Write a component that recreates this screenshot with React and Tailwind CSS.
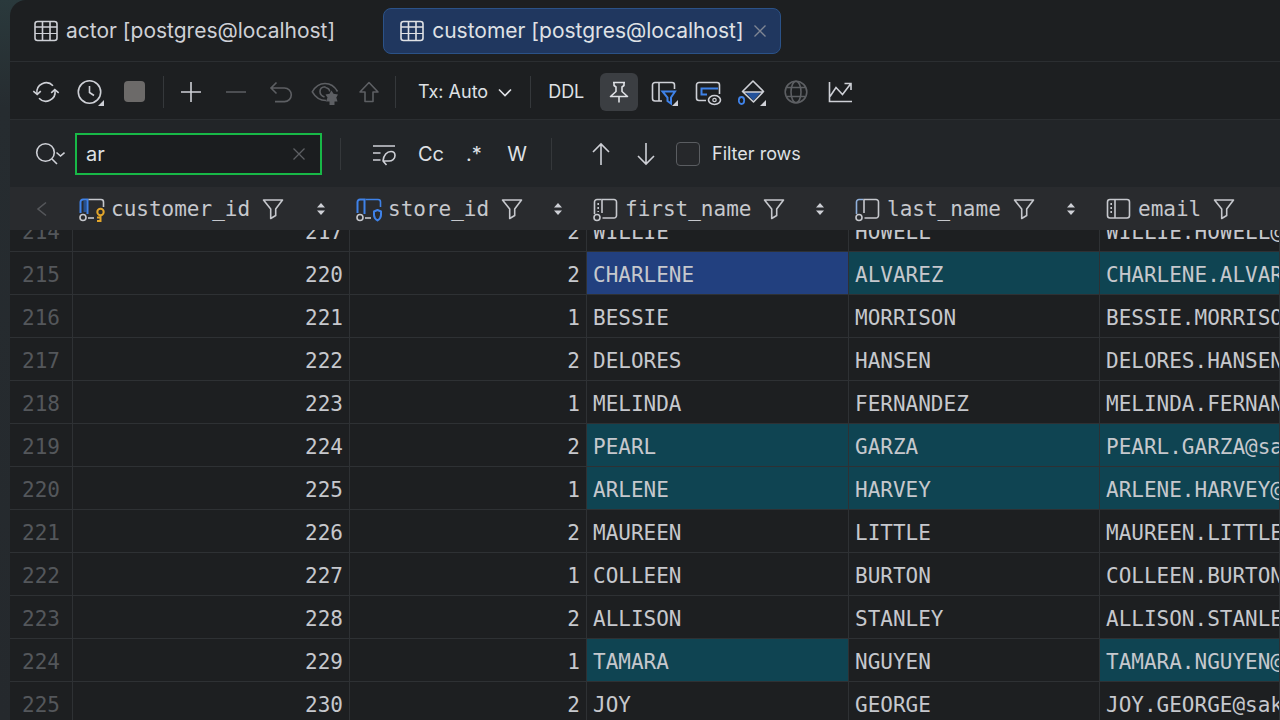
import { useLayoutEffect, useRef, useState } from 'react';

const COLUMNS = [
  { key: 'customer_id', kind: 'primary', width: 'w-[277px]', numeric: true },
  { key: 'store_id', kind: 'foreign', width: 'w-[237px]', numeric: true },
  { key: 'first_name', kind: 'indexed', width: 'w-[262px]' },
  { key: 'last_name', kind: 'indexedSoft', width: 'w-[251px]' },
  { key: 'email', kind: 'plain', width: '' },
];

const ROWS = [
  [214, 217, 2, 'WILLIE', 'HOWELL'],
  [215, 220, 2, 'CHARLENE', 'ALVAREZ'],
  [216, 221, 1, 'BESSIE', 'MORRISON'],
  [217, 222, 2, 'DELORES', 'HANSEN'],
  [218, 223, 1, 'MELINDA', 'FERNANDEZ'],
  [219, 224, 2, 'PEARL', 'GARZA'],
  [220, 225, 1, 'ARLENE', 'HARVEY'],
  [221, 226, 2, 'MAUREEN', 'LITTLE'],
  [222, 227, 1, 'COLLEEN', 'BURTON'],
  [223, 228, 2, 'ALLISON', 'STANLEY'],
  [224, 229, 1, 'TAMARA', 'NGUYEN'],
  [225, 230, 2, 'JOY', 'GEORGE'],
].map(([row, customer_id, store_id, first_name, last_name]) => ({
  row,
  customer_id,
  store_id,
  first_name,
  last_name,
  email: `${first_name}.${last_name}@sakilacustomer.org`,
}));

function Icon({ size = 28, className = '', children }) {
  return (
    <svg
      width={size}
      height={size}
      viewBox={`0 0 ${size} ${size}`}
      fill="none"
      stroke="currentColor"
      strokeWidth="1.6"
      className={`shrink-0 ${className}`}
      aria-hidden="true"
    >
      {children}
    </svg>
  );
}

const Corner = () => (
  <>
    <path d="M29 21v7h-7z" fill="#1d1f21" stroke="#1d1f21" strokeWidth="3" />
    <path d="M28 22v6h-6z" fill="#ced0d6" stroke="none" />
  </>
);

const TableIcon = () => (
  <Icon size={24}>
    <rect x="1" y="2.5" width="22" height="19" rx="2.5" />
    <path d="M1 8h22M8.5 2.5v19M16 2.5v19" />
    <path d="M1 14.5h22" strokeWidth="1" />
  </Icon>
);

const RefreshIcon = () => (
  <Icon>
    <path d="M5 15.5A9.3 9.3 0 0 1 21 7.8M23 12.5A9.3 9.3 0 0 1 7 20.2" />
    <path d="M1.3 13.2 5.2 16.4 8.8 13.2M26.7 14.8 22.8 11.6 19.2 14.8" />
  </Icon>
);

const ClockIcon = () => (
  <Icon>
    <circle cx="13.5" cy="14" r="11.2" />
    <path d="M13.5 8v6.5l4.5 3" />
    <Corner />
  </Icon>
);

const UndoIcon = () => (
  <Icon>
    <path d="M9.5 4.5 4 10l5.5 5.5M4 10h13.5a6.8 6.8 0 0 1 0 13.6H8" />
  </Icon>
);

const PreviewIcon = () => (
  <Icon>
    <path d="M15 22.5C8 22.5 4 18.5 1.3 13.8 4 9 8.500 5.500 14 5.500S24 9 26.500 13.500" />
    <path d="M13.500 19C10.500 18 9 16 9 13.500 9 11 11 9 14.500 8.800M14.500 9.500c2.500.5 4 2 4.200 4" />
    <path
      d="M20.500 12.500l2 3.200 4.500.8-1.700 3 1.200 4h-3v3.500h-5V23.500h-3.500l1.500-4-2-3 4-.8z"
      fill="currentColor"
      stroke="none"
    />
  </Icon>
);

const SubmitIcon = () => (
  <Icon>
    <path d="M14 4.500 23 14h-5v9.500h-8V14H5z" strokeLinejoin="round" />
  </Icon>
);

const PinIcon = () => (
  <Icon>
    <path d="M8 4.500h12M9 5v2.500L11 9v4.500L5.500 18.500h17L17 13.500V9l2-1.500V5M14 18.500v6" strokeLinejoin="round" />
  </Icon>
);

const ColumnFilterIcon = () => (
  <Icon>
    <path d="M12 23H5a2.500 2.500 0 0 1-2.500-2.500V7A2.500 2.500 0 0 1 5 4.500h17A2.500 2.500 0 0 1 24.500 7v4M9 4.500V23" />
    <Corner />
    <path d="M12.500 13.500H25L21 19.500V25.500L17.500 23v-3.500z" stroke="#3f82e8" strokeWidth="2" />
  </Icon>
);

const ViewIcon = () => (
  <Icon>
    <path d="M12 22.500H5A2.500 2.500 0 0 1 2.500 20V7A2.500 2.500 0 0 1 5 4.500h18A2.500 2.500 0 0 1 25.500 7v9" />
    <path d="M24 10.500H7.500v6H13" stroke="#3f82e8" strokeWidth="2" />
    <ellipse cx="20.500" cy="22" rx="6" ry="4.500" />
    <circle cx="20.500" cy="22" r="1.700" strokeWidth="1.200" />
  </Icon>
);

const FillIcon = () => (
  <Icon>
    <path d="M7 14h16l-7.500 8.500z" fill="#24529b" stroke="none" />
    <path d="M15 3 4.500 13.500l11 10.500 10-10.500zM5 14h20" strokeLinejoin="round" />
    <ellipse cx="3.500" cy="22.500" rx="2.700" ry="3.500" fill="#1d1f21" stroke="#3f82e8" strokeWidth="1.800" />
    <Corner />
  </Icon>
);

const GlobeIcon = () => (
  <Icon>
    <circle cx="14" cy="14" r="10.800" />
    <ellipse cx="14" cy="14" rx="5" ry="10.800" />
    <path d="M4.500 9.500h19M4.500 18.500h19" />
  </Icon>
);

const ChartIcon = () => (
  <Icon>
    <path d="M3.500 4v19.500H26M4 18.500l6-9 6.500 7L24.500 6M18.500 5.500h6.500V12" />
  </Icon>
);

const SearchIcon = () => (
  <Icon size={30}>
    <circle cx="10.500" cy="13.500" r="8.800" />
    <path d="m17 20 5 5M21.500 13.500l4 3.500 4-3.500" />
  </Icon>
);

const NewlineIcon = () => (
  <Icon>
    <path d="M3 6h22M3 13h7.500M3 20h7.500" />
    <path d="M13 21l3.500 4M13 21c.5-6 4-9.500 8-9.500 2.500 0 4 1.500 4 4 0 3.500-3 5.500-6 5.500z" strokeLinejoin="round" />
  </Icon>
);

const CloseIcon = () => (
  <Icon size={16}>
    <path d="m2.500 2.500 11 11M13.500 2.500l-11 11" strokeWidth="1.300" />
  </Icon>
);

const FunnelIcon = () => (
  <Icon size={22}>
    <path d="M1.500 2h19l-6.800 9v6.500l-5 3V11z" strokeLinejoin="round" />
  </Icon>
);

const SortIcon = () => (
  <svg width="8" height="14" viewBox="0 0 8 14" fill="#ced0d6" aria-hidden="true">
    <path d="M4 1l4 4.500H0zM4 13l4-4.500H0z" />
  </svg>
);

function ColumnIcon({ kind }) {
  if (kind === 'plain') {
    return (
      <Icon size={26}>
        <rect x="1.500" y="3.500" width="22" height="18.500" rx="2.500" />
        <path d="M9 3.500V22" />
        <path d="M5.200 7v12" strokeDasharray="2 2" />
      </Icon>
    );
  }
  if (kind === 'indexed' || kind === 'indexedSoft') {
    return (
      <Icon size={26}>
        <path
          d="M1.500 18V6A2.500 2.500 0 0 1 4 3.500h4.500"
          stroke={kind === 'indexedSoft' ? '#8fb0dc' : 'currentColor'}
        />
        <path d="M8.500 3.500H21A2.500 2.500 0 0 1 23.500 6v13.500A2.500 2.500 0 0 1 21 22H9.500M9 3.500V17" />
        {kind === 'indexed' && <path d="M5.200 7v9" strokeDasharray="2 2" />}
        <circle cx="4" cy="21.500" r="3" />
      </Icon>
    );
  }
  return (
    <Icon size={26}>
      {kind === 'primary' && <path d="M4.500 5h3v11h-3z" fill="#254f8e" stroke="none" />}
      <path d="M1.500 17V6A2.500 2.500 0 0 1 4 3.500h4.500V18" stroke="#3f82e8" strokeWidth="2" />
      <path
        d="M9.500 3.500H22A2.500 2.500 0 0 1 24.500 6v5"
        stroke={kind === 'primary' ? 'currentColor' : '#3f82e8'}
      />
      <circle cx="4" cy="21.500" r="3" />
      <path d="M9 22h6" />
      {kind === 'primary' ? (
        <g stroke="#e3a62b" strokeWidth="2">
          <circle cx="21.500" cy="16" r="3.200" />
          <path d="M21.500 19v7M21.500 21.500h-3.500M21.500 25H18" />
        </g>
      ) : (
        <path d="M21.500 14 25 15.500v3.500c0 2.500-1.500 4.200-3.500 5.500-2-1.300-3.500-3-3.500-5.500v-3.500z" stroke="#3f82e8" strokeWidth="2" strokeLinejoin="round" />
      )}
    </Icon>
  );
}

function ToolButton({ label, dim, className = 'w-11', children }) {
  return (
    <button
      aria-label={label}
      className={`flex h-10 shrink-0 items-center justify-center ${dim ? 'text-[#5d5f63]' : 'text-[#ced0d6]'} ${className}`}
    >
      {children}
    </button>
  );
}

const Separator = () => <div className="h-8 w-px shrink-0 bg-[#35383b]" />;

function Tabs() {
  return (
    <nav className="flex h-[62px] shrink-0 items-center gap-9 border-b border-[#2b2e31] pt-px pl-3 text-[21px] text-[#ced0d6]">
      <button className="flex h-[46px] items-center gap-2 px-3">
        <TableIcon />
        <span className="whitespace-nowrap">actor [postgres@localhost]</span>
      </button>
      <div className="flex h-[46px] items-center gap-2 rounded-lg border border-[#2b5288] bg-[#20375f] px-3 text-[#dfe1e5]">
        <button className="flex items-center gap-2 pl-1">
          <TableIcon />
          <span className="whitespace-nowrap">customer [postgres@localhost]</span>
        </button>
        <button aria-label="Close tab" className="text-[#7f8694]">
          <CloseIcon />
        </button>
      </div>
    </nav>
  );
}

function Toolbar() {
  return (
    <div className="flex h-[58px] shrink-0 items-center border-b border-[#2b2e31] pt-0.5 pl-3.5 text-lg text-[#dfe1e5]">
      <ToolButton label="Reload"><RefreshIcon /></ToolButton>
      <ToolButton label="History"><ClockIcon /></ToolButton>
      <ToolButton label="Stop" dim><span className="size-[21px] rounded-sm bg-[#6c6a69]" /></ToolButton>
      <div className="flex items-center pr-1 pl-[7px]">
        <Separator />
        <div className="flex pl-1">
          <ToolButton label="Add row" className="w-[45px]"><Icon><path d="M14 4v20M4 14h20" /></Icon></ToolButton>
          <ToolButton label="Delete row" dim className="w-[45px]"><Icon><path d="M4 14h20" /></Icon></ToolButton>
          <ToolButton label="Revert" dim className="w-[45px]"><UndoIcon /></ToolButton>
          <ToolButton label="Preview changes" dim className="w-11"><PreviewIcon /></ToolButton>
          <ToolButton label="Submit" dim className="w-11"><SubmitIcon /></ToolButton>
        </div>
      </div>
      <Separator />
      <button className="flex items-center gap-2 pr-4 pl-[22px] whitespace-nowrap">
        Tx: Auto
        <Icon size={18}><path d="m3 6.500 6 6 6-6" /></Icon>
      </button>
      <Separator />
      <button className="pr-4 pl-[17px]">DDL</button>
      <button aria-label="Pin tab" aria-pressed="true" className="mr-1 flex size-[38px] shrink-0 items-center justify-center rounded-md bg-[#3b3e42]">
        <PinIcon />
      </button>
      <ToolButton label="Column filter"><ColumnFilterIcon /></ToolButton>
      <ToolButton label="View options"><ViewIcon /></ToolButton>
      <ToolButton label="Coloring"><FillIcon /></ToolButton>
      <ToolButton label="Open in browser" dim><GlobeIcon /></ToolButton>
      <ToolButton label="Show chart"><ChartIcon /></ToolButton>
    </div>
  );
}

function SearchBar() {
  const [query, setQuery] = useState('ar');
  const [filterRows, setFilterRows] = useState(false);

  return (
    <div className="flex h-[67px] shrink-0 items-center bg-[#222528] text-[#dfe1e5]">
      <button aria-label="Search history" className="pr-[10px] pl-[25px] text-[#ced0d6]">
        <SearchIcon />
      </button>
      <div className="flex h-[42px] w-[247px] shrink-0 items-center border-2 border-[#18b847] bg-[#1b1d1f] pr-[13px] pl-[9px]">
        <input
          aria-label="Search"
          value={query}
          onChange={(e) => setQuery(e.target.value)}
          className="min-w-0 flex-1 bg-transparent text-xl outline-none"
        />
        <button aria-label="Clear search" onClick={() => setQuery('')} className="text-[#5d5f63]">
          <CloseIcon />
        </button>
      </div>
      <div className="flex items-center pl-[18px] text-xl">
        <Separator />
        <ToolButton label="New line" className="ml-[21px] w-11"><NewlineIcon /></ToolButton>
        <button aria-label="Match case" className="h-10 w-[50px]">Cc</button>
        <button aria-label="Regex" className="h-10 w-9">.*</button>
        <button aria-label="Words" className="mr-[9px] h-10 w-[50px]">W</button>
        <Separator />
      </div>
      <ToolButton label="Previous match" className="ml-[26px] w-[45px]">
        <Icon><path d="M14 25V4M6 12l8-8 8 8" /></Icon>
      </ToolButton>
      <ToolButton label="Next match" className="w-[45px]">
        <Icon><path d="M14 3v21M6 16l8 8 8-8" /></Icon>
      </ToolButton>
      <label className="flex items-center gap-3 pl-2 text-lg whitespace-nowrap">
        <input
          type="checkbox"
          checked={filterRows}
          onChange={(e) => setFilterRows(e.target.checked)}
          className="size-6 appearance-none rounded-sm border border-[#5a5d61] bg-[#26282b] checked:bg-[#3574f0]"
        />
        Filter rows
      </label>
    </div>
  );
}

function cellColor(row, key) {
  // selected cell
  if (row.row === 215 && key === 'first_name') return 'bg-[#22407f]';
  return String(row[key]).toLowerCase().includes('ar') ? 'bg-[#0f4452]' : '';
}

function DataGrid() {
  const scroller = useRef(null);

  useLayoutEffect(() => {
    scroller.current.scrollTop = 21;
  }, []);

  return (
    <div ref={scroller} className="min-h-0 flex-1 overflow-auto [scrollbar-width:none]">
      <table className="w-full min-w-[1269px] table-fixed border-separate border-spacing-0 font-['DejaVu_Sans_Mono',monospace] text-[21px] text-[#c6c8cd]">
        <thead>
          <tr>
            <th className="sticky top-0 h-[43px] w-[63px] bg-[#292b2e] p-0">
              <button aria-label="Collapse" className="flex w-full justify-center text-[#55575b]">
                <Icon size={20}><path d="M14 3.500 6 10l8 6.500" /></Icon>
              </button>
            </th>
            {COLUMNS.map(({ key, kind, width }) => (
              <th key={key} className={`sticky top-0 h-[43px] bg-[#292b2e] p-0 font-normal ${width}`}>
                <div className="flex items-center pr-[25px] pl-[6px]">
                  <ColumnIcon kind={kind} />
                  <span className="pt-0.5 pr-3 pl-[6px]">{key}</span>
                  <button aria-label={`Filter ${key}`}><FunnelIcon /></button>
                  {key !== 'email' && (
                    <button aria-label={`Sort by ${key}`} className="ml-auto"><SortIcon /></button>
                  )}
                </div>
              </th>
            ))}
          </tr>
        </thead>
        <tbody>
          {ROWS.map((row) => (
            <tr key={row.row}>
              <td className="h-[43px] border-r border-b border-[#2e3134] pt-[6px] pr-3 pb-0 pl-0 text-right text-[#54575b]">{row.row}</td>
              {COLUMNS.map(({ key, numeric }) => (
                <td
                  key={key}
                  className={`h-[43px] overflow-hidden border-r border-b border-[#2e3134] px-[6px] pt-[6px] pb-0 whitespace-nowrap ${numeric ? 'text-right' : ''} ${cellColor(row, key)}`}
                >
                  {row[key]}
                </td>
              ))}
            </tr>
          ))}
        </tbody>
      </table>
    </div>
  );
}

export default function App() {
  return (
    <div className="h-screen overflow-hidden bg-linear-to-b from-[#2a393c] via-[#262c30] via-15% to-[#25292d] pl-[10px] font-['Inter',sans-serif]">
      <main className="flex h-full flex-col overflow-hidden rounded-tl-2xl bg-[#1d1f21]">
        <Tabs />
        <Toolbar />
        <SearchBar />
        <DataGrid />
      </main>
    </div>
  );
}
